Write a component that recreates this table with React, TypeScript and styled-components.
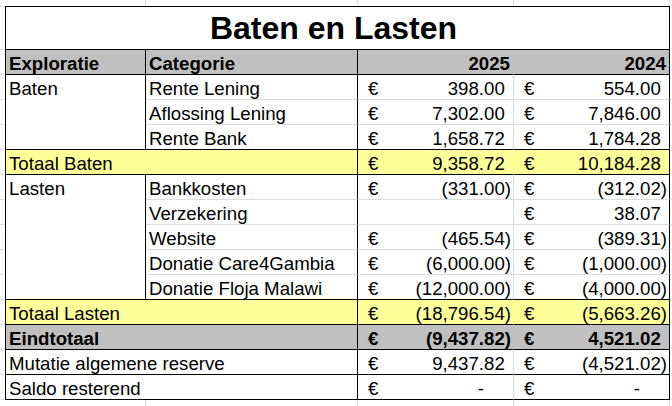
import React from "react";
import styled, { createGlobalStyle } from "styled-components";

const GRID = "#dadcdd";
const BLACK = "#000";
const YELLOW = "#ffff99";
const GRAY = "#c0c0c0";

const GlobalStyle = createGlobalStyle`
  html, body {
    margin: 0;
    padding: 0;
  }
  body {
    min-height: 406px;
    background:
      linear-gradient(${GRID}, ${GRID}) 145px 0 / 1px 100% no-repeat,
      linear-gradient(${GRID}, ${GRID}) 357px 0 / 1px 100% no-repeat,
      linear-gradient(${GRID}, ${GRID}) 513px 0 / 1px 100% no-repeat,
      linear-gradient(${GRID}, ${GRID}) 669px 0 / 1px 100% no-repeat,
      linear-gradient(${GRID}, ${GRID}) 0 6px / 100% 1px no-repeat,
      repeating-linear-gradient(to bottom, ${GRID} 0 1px, transparent 1px 25px) 0 49px / 100% 100% no-repeat,
      #fff;
  }
`;

const Sheet = styled.div`
  display: grid;
  grid-template-columns: 140px 212px 156px 156px;
  grid-template-rows: 43px repeat(14, 25px);
  width: max-content;
  margin: 6px 0 0 5px;
  border-left: 1px solid ${BLACK};
  border-top: 1px solid ${BLACK};
  background: #fff;
  color: #000;
  font-family: "Liberation Sans", Arial, sans-serif;
  font-size: 18.67px;
  line-height: 21px;
`;

type CellProps = {
  $bg?: string;
  $r?: string;
  $b?: string;
  $bold?: boolean;
  $span?: number;
  $rows?: number;
  $right?: boolean;
};

const Cell = styled.div<CellProps>`
  box-sizing: border-box;
  padding: 3px 3px 0 3px;
  white-space: nowrap;
  overflow: hidden;
  background: ${(p) => p.$bg || "#fff"};
  border-right: 1px solid ${(p) => p.$r || GRID};
  border-bottom: 1px solid ${(p) => p.$b || GRID};
  font-weight: ${(p) => (p.$bold ? 700 : 400)};
  text-align: ${(p) => (p.$right ? "right" : "left")};
  grid-column: span ${(p) => p.$span || 1};
  grid-row: span ${(p) => p.$rows || 1};
`;

const Title = styled(Cell)`
  grid-column: 1 / -1;
  text-align: center;
  font-size: 32px;
  line-height: 36px;
  padding: 3px 8px 0 0;
`;

const AmountCell = styled(Cell)`
  display: flex;
  justify-content: space-between;
  padding: 3px 2px 0 10px;
`;

const Ghost = styled.span`
  visibility: hidden;
`;

type Amount = number | null | undefined;

const fmt = (v: number) =>
  Math.abs(v).toLocaleString("en-US", {
    minimumFractionDigits: 2,
    maximumFractionDigits: 2,
  });

const Money = ({ value, ...rest }: { value: Amount } & CellProps) => {
  if (value === undefined) return <AmountCell {...rest} />;
  return (
    <AmountCell {...rest}>
      <span>€</span>
      <span>
        {value === null ? (
          <>
            -<Ghost>00)</Ghost>
          </>
        ) : value < 0 ? (
          `(${fmt(value)})`
        ) : (
          <>
            {fmt(value)}
            <Ghost>)</Ghost>
          </>
        )}
      </span>
    </AmountCell>
  );
};

type Line = { name: string; y25: Amount; y24: Amount };

const baten: Line[] = [
  { name: "Rente Lening", y25: 398, y24: 554 },
  { name: "Aflossing Lening", y25: 7302, y24: 7846 },
  { name: "Rente Bank", y25: 1658.72, y24: 1784.28 },
];

const lasten: Line[] = [
  { name: "Bankkosten", y25: -331, y24: -312.02 },
  { name: "Verzekering", y25: undefined, y24: 38.07 },
  { name: "Website", y25: -465.54, y24: -389.31 },
  { name: "Donatie Care4Gambia", y25: -6000, y24: -1000 },
  { name: "Donatie Floja Malawi", y25: -12000, y24: -4000 },
];

const Group = ({ label, lines }: { label: string; lines: Line[] }) => (
  <>
    <Cell $r={BLACK} $b={BLACK} $rows={lines.length}>
      {label}
    </Cell>
    {lines.map((l, i) => {
      const b = i === lines.length - 1 ? BLACK : GRID;
      return (
        <React.Fragment key={l.name}>
          <Cell $r={BLACK} $b={b}>
            {l.name}
          </Cell>
          <Money value={l.y25} $b={b} />
          <Money value={l.y24} $b={b} $r={BLACK} />
        </React.Fragment>
      );
    })}
  </>
);

const TotalRow = ({
  label,
  y25,
  y24,
  bg,
  bold,
}: {
  label: string;
  y25: Amount;
  y24: Amount;
  bg?: string;
  bold?: boolean;
}) => (
  <>
    <Cell $span={2} $bg={bg} $r={BLACK} $b={BLACK} $bold={bold}>
      {label}
    </Cell>
    <Money value={y25} $bg={bg} $r={bg} $b={BLACK} $bold={bold} />
    <Money value={y24} $bg={bg} $r={BLACK} $b={BLACK} $bold={bold} />
  </>
);

const App = () => (
  <>
    <GlobalStyle />
    <Sheet>
      <Title $b={BLACK} $r={BLACK} $bold>
        Baten en Lasten
      </Title>

      <Cell $bg={GRAY} $r={BLACK} $b={BLACK} $bold>
        Exploratie
      </Cell>
      <Cell $bg={GRAY} $r={BLACK} $b={BLACK} $bold>
        Categorie
      </Cell>
      <Cell $bg={GRAY} $r={GRAY} $b={BLACK} $bold $right>
        2025
      </Cell>
      <Cell $bg={GRAY} $r={BLACK} $b={BLACK} $bold $right>
        2024
      </Cell>

      <Group label="Baten" lines={baten} />
      <TotalRow label="Totaal Baten" y25={9358.72} y24={10184.28} bg={YELLOW} />
      <Group label="Lasten" lines={lasten} />
      <TotalRow label="Totaal Lasten" y25={-18796.54} y24={-5663.26} bg={YELLOW} />
      <TotalRow label="Eindtotaal" y25={-9437.82} y24={4521.02} bg={GRAY} bold />
      <TotalRow label="Mutatie algemene reserve" y25={9437.82} y24={-4521.02} />
      <TotalRow label="Saldo resterend" y25={null} y24={null} />
    </Sheet>
  </>
);

export default App;
